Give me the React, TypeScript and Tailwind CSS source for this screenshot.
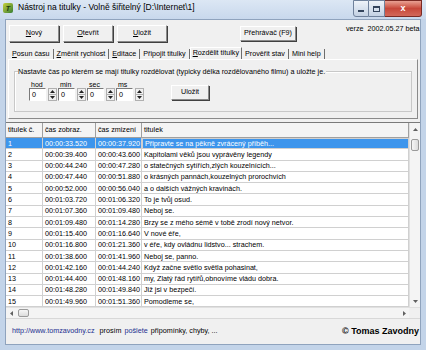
import React from "react";

const ROWS: [string, string, string][] = [
  ["00:00:33.520", "00:00:37.920", "Připravte se na pěkně zvrácený příběh..."],
  ["00:00:39.400", "00:00:43.600", "Kapitolami věků jsou vyprávěny legendy"],
  ["00:00:44.240", "00:00:47.280", "o statečných sytířích,zlých kouzelnících..."],
  ["00:00:47.440", "00:00:51.880", "o krásných pannách,kouzelných prorochvích"],
  ["00:00:52.000", "00:00:56.040", "a o dalších vážných kravinách."],
  ["00:01:03.720", "00:01:06.320", "To je tvůj osud."],
  ["00:01:07.360", "00:01:09.480", "Neboj se."],
  ["00:01:09.480", "00:01:14.280", "Brzy se z mého sémě v tobě zrodí nový netvor."],
  ["00:01:15.400", "00:01:16.640", "V nové éře,"],
  ["00:01:16.800", "00:01:21.360", "v éře, kdy ovládnu lidstvo... strachem."],
  ["00:01:38.600", "00:01:41.960", "Neboj se, panno."],
  ["00:01:42.160", "00:01:44.240", "Když začne světlo světla pohasinat,"],
  ["00:01:44.400", "00:01:48.160", "my, Zlatý řád rytířů,obnovíme vládu dobra."],
  ["00:01:48.280", "00:01:49.840", "Již jsi v bezpečí."],
  ["00:01:49.960", "00:01:51.360", "Pomodleme se,"],
];

const TABS = [
  { u: "P", rest: "osun času" },
  { u: "Z", rest: "měnit rychlost" },
  { u: "E", rest: "ditace" },
  { u: "", rest: "Připojit titulky" },
  { u: "R", rest: "ozdělit titulky", active: true },
  { u: "", rest: "Prověřit stav" },
  { u: "", rest: "Mini help" },
];

const SPINS = ["hod", "min", "sec", "ms"];

function Btn({ children, className = "" }: { children: React.ReactNode; className?: string }) {
  return (
    <div
      className={`flex items-center justify-center border border-t-white border-l-white border-r-[#8a8a8a] border-b-[#8a8a8a] bg-[#f0f0f0] shadow-[1px_1px_0_#404040] text-[7.2px] text-black ${className}`}
    >
      {children}
    </div>
  );
}

function Spin({ label }: { label: string }) {
  return (
    <div className="flex flex-col">
      <span className="h-[7px] pl-[2px] text-[7px] leading-[7px] text-black">{label}</span>
      <div className="flex items-start gap-[2px]">
        <div className="h-[13px] w-[17px] border border-t-[#7a7a7a] border-l-[#7a7a7a] border-r-white border-b-white bg-white pl-[2px] text-[7.2px] leading-[11px]">
          0
        </div>
        <div className="flex h-[13px] w-[9px] flex-col border border-[#b0b0b0] bg-[#f0f0f0]">
          <div className="flex flex-1 items-center justify-center border-b border-[#b0b0b0]">
            <svg width="5" height="3" viewBox="0 0 5 3"><path d="M0 3 L2.5 0 L5 3 Z" fill="#222" /></svg>
          </div>
          <div className="flex flex-1 items-center justify-center">
            <svg width="5" height="3" viewBox="0 0 5 3"><path d="M0 0 L2.5 3 L5 0 Z" fill="#222" /></svg>
          </div>
        </div>
      </div>
    </div>
  );
}

function TitleBar() {
  return (
    <div className="flex h-[19px] items-start bg-gradient-to-b from-[#dce7f4] to-[#c8d8ec]">
      <div className="ml-[3px] mt-[3px] flex h-[10px] w-[10px] items-center justify-center rounded-[2px] bg-gradient-to-br from-[#c8d23a] to-[#2f7d32]">
        <span className="text-[7px] font-bold italic leading-none text-[#1c3b10]">T</span>
      </div>
      <span className="ml-[5px] mt-[2px] text-[8.5px] leading-[11px] text-black">
        Nástroj na titulky - Volně šiřitelný [D:\Internet\1]
      </span>
      <div className="ml-auto mr-[4px] flex">
        <div className="flex h-[17px] w-[16px] items-center justify-center rounded-bl-[3px] border border-[#6f819b] bg-gradient-to-b from-[#eef3f9] to-[#c3d1e3]">
          <div className="mt-[4px] h-[2px] w-[6px] bg-[#33445c]" />
        </div>
        <div className="flex h-[17px] w-[16px] items-center justify-center border-y border-r border-[#6f819b] bg-gradient-to-b from-[#eef3f9] to-[#c3d1e3]">
          <div className="h-[6px] w-[7px] border border-t-2 border-[#33445c]" />
        </div>
        <div className="flex h-[17px] w-[37px] items-center justify-center rounded-br-[3px] border-y border-r border-[#7a2a24] bg-gradient-to-b from-[#e8a093] via-[#c7473a] to-[#d2685a]">
          <span className="text-[9px] font-bold leading-none text-white">x</span>
        </div>
      </div>
    </div>
  );
}

function Grid() {
  return (
    <div className="flex flex-col border-t border-[#7a7a7a] bg-white">
      <div className="flex">
        <div className="flex w-[405px] flex-col">
          <div className="grid h-[15px] grid-cols-[37px_53px_46px_1fr] bg-[#f4f4f4] text-[7.2px] text-black">
            {["titulek č.", "čas zobraz.", "čas zmizení", "titulek"].map((h) => (
              <div key={h} className="flex items-center border-r border-b border-[#a0a0a0] pl-[2px]">
                {h}
              </div>
            ))}
          </div>
          {ROWS.map((r, i) => {
            const sel = i === 0;
            const cell = `flex h-[11.3px] items-center border-r border-b border-[#d0d0d0] pl-[2px] overflow-hidden whitespace-nowrap ${sel ? "bg-[#3d95ec] text-white" : "text-black"}`;
            return (
              <div key={i} className="grid grid-cols-[37px_53px_46px_1fr] text-[7.2px] leading-none">
                <div className={cell}>{i + 1}</div>
                <div className={cell}>{r[0]}</div>
                <div className={cell}>{r[1]}</div>
                <div className={`${cell} ${sel ? "border border-[#9cc8f2]" : ""}`}>{r[2]}</div>
              </div>
            );
          })}
        </div>
        <div className="flex w-[11px] flex-col border-l border-[#e0e0e0] bg-[#f4f4f4]">
          <div className="flex h-[12px] items-center justify-center">
            <svg width="5" height="3" viewBox="0 0 5 3"><path d="M0 3 L2.5 0 L5 3 Z" fill="#606060" /></svg>
          </div>
          <div className="mx-[1px] mt-[4px] h-[12px] rounded-[2px] border border-[#9a9a9a] bg-gradient-to-r from-[#f6f6f6] to-[#dcdcdc]" />
          <div className="flex-1" />
          <div className="flex h-[12px] items-center justify-center">
            <svg width="5" height="3" viewBox="0 0 5 3"><path d="M0 0 L2.5 3 L5 0 Z" fill="#606060" /></svg>
          </div>
        </div>
      </div>
      <div className="flex h-[11px] border-t border-[#e0e0e0] bg-[#f4f4f4]">
        <div className="flex w-[10px] items-center justify-center">
          <svg width="3" height="5" viewBox="0 0 3 5"><path d="M3 0 L0 2.5 L3 5 Z" fill="#606060" /></svg>
        </div>
        <div className="my-[1px] ml-[2px] w-[11px] rounded-[2px] border border-[#9a9a9a] bg-gradient-to-b from-[#f6f6f6] to-[#dcdcdc]" />
        <div className="flex-1" />
        <div className="flex w-[10px] items-center justify-center">
          <svg width="3" height="5" viewBox="0 0 3 5"><path d="M0 0 L3 2.5 L0 5 Z" fill="#606060" /></svg>
        </div>
        <div className="w-[11px] bg-[#f0f0f0]" />
      </div>
    </div>
  );
}

export default function App() {
  return (
    <div className="flex h-[350px] w-[426px] flex-col overflow-hidden bg-[#c3d4e9] font-['Liberation_Sans',Arial,sans-serif]">
      <TitleBar />
      <div className="mx-[5px] mb-[5px] flex flex-1 flex-col border border-[#8fa3bd] bg-[#f0f0f0]">
        {/* toolbar */}
        <div className="flex h-[27px] items-start">
          <div className="ml-[3px] mt-[5px] flex gap-[4px]">
            <Btn className="h-[17px] w-[50px]"><span><u>N</u>ový</span></Btn>
            <Btn className="h-[17px] w-[50px]"><span><u>O</u>tevřít</span></Btn>
            <Btn className="h-[17px] w-[50px]"><span><u>U</u>ložit</span></Btn>
          </div>
          <Btn className="ml-[73px] mt-[6px] h-[15px] w-[56px]">Přehrávač (F9)</Btn>
          <span className="ml-[50px] mt-[4px] whitespace-nowrap text-[7.2px] text-black">verze&nbsp; 2002.05.27 beta</span>
        </div>

        {/* tabs */}
        <div className="flex h-[12px] items-end pl-[3px] text-[7.2px] text-black">
          {TABS.map((t) =>
            t.active ? (
              <div key={t.rest} className="flex h-[12px] items-center border border-b-0 border-t-white border-l-white border-r-[#6d6d6d] bg-[#f0f0f0] px-[2px]">
                <span><u>{t.u}</u>{t.rest}</span>
              </div>
            ) : (
              <div key={t.rest} className="flex h-[10px] items-center border-r border-[#6d6d6d] px-[3px]">
                <span>{t.u && <u>{t.u}</u>}{t.rest}</span>
              </div>
            )
          )}
        </div>

        {/* tab page */}
        <div className="mx-[2px] flex h-[60px] flex-col border border-t-white border-l-white border-r-[#8a8a8a] border-b-[#8a8a8a] px-[5px] pt-[11px]">
          <div className="relative h-[41px] border border-[#c8c8c8] shadow-[inset_1px_1px_0_#fff]">
            <span className="absolute left-[3px] top-[-5px] whitespace-nowrap bg-[#f0f0f0] pr-[1px] text-[7.2px] leading-[9px] text-black">
              Nastavte čas po kterém se mají titulky rozdělovat (typicky délka rozdělovaného filmu) a uložte je.
            </span>
            <div className="ml-[14px] mt-[9px] flex items-end">
              <div className="flex gap-[1px]">
                {SPINS.map((s) => (
                  <Spin key={s} label={s} />
                ))}
              </div>
              <Btn className="mb-[1px] ml-[27px] h-[15px] w-[38px]">Uložit</Btn>
            </div>
          </div>
        </div>

        {/* grid */}
        <div className="mt-[3px]">
          <Grid />
        </div>

        {/* status */}
        <div className="flex flex-1 items-center border-t border-[#d8d8d8] pl-[6px] pr-[1px] text-[7.2px] whitespace-nowrap">
          <span className="text-[#1b2f8f]">http://www.tomzavodny.cz</span>
          <span className="ml-[5px] text-black">prosím</span>
          <span className="ml-[3px] text-[#1b2f8f]">pošlete</span>
          <span className="ml-[3px] text-black">připomínky, chyby, ...</span>
          <span className="ml-auto text-[9px] font-bold text-black">© Tomas Zavodny</span>
        </div>
      </div>
    </div>
  );
}
